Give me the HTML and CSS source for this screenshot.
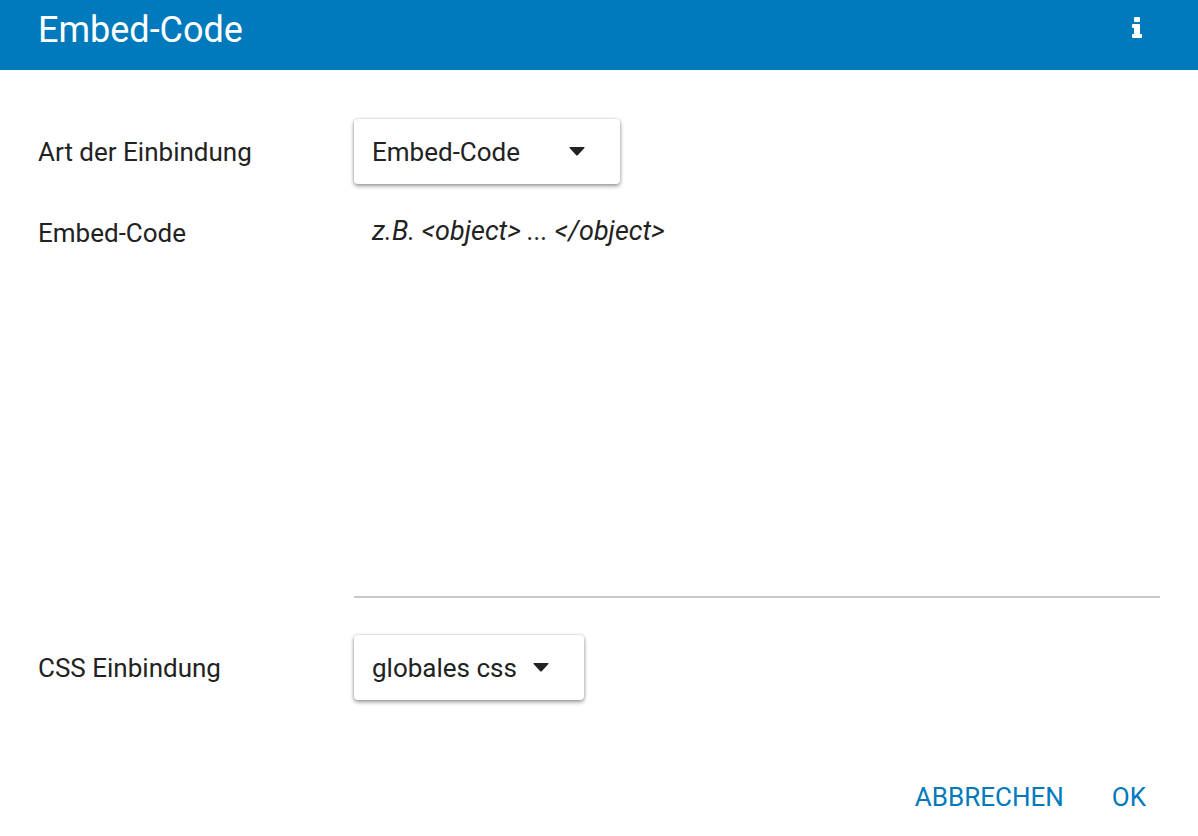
FILE: index.html
```html
<!DOCTYPE html>
<html lang="de">
<head>
  <meta charset="UTF-8">
  <meta name="viewport" content="width=device-width, initial-scale=1.0">
  <title>Embed-Code</title>
  <link rel="stylesheet" href="styles.css">
</head>
<body>
  <form class="dialog">
    <header class="dialog-header">
      <h1>Embed-Code</h1>
      <button class="info-btn" type="button" aria-label="Info">
        <svg viewBox="0 0 10 21" width="10" height="21" fill="currentColor">
          <path d="M3 0h4q1 0 1 1v3q0 1-1 1H3Q2 5 2 4V1q0-1 1-1zM1 7h6q1 0 1 1v9h1q1 0 1 1v2q0 1-1 1H1q-1 0-1-1v-2q0-1 1-1h1v-6H1q-1 0-1-1V8q0-1 1-1z"/>
        </svg>
      </button>
    </header>

    <div class="dialog-body">
      <div class="row">
        <label for="embedType">Art der Einbindung</label>
        <div class="field">
          <select class="select select-type" id="embedType">
            <option>Embed-Code</option>
          </select>
        </div>
      </div>
      <div class="row row-code">
        <label for="embedCode">Embed-Code</label>
        <textarea class="code" id="embedCode" placeholder="z.B. &lt;object&gt; ... &lt;/object&gt;"></textarea>
      </div>
      <div class="row">
        <label for="cssType">CSS Einbindung</label>
        <div class="field">
          <select class="select select-css" id="cssType">
            <option>globales css</option>
          </select>
        </div>
      </div>
    </div>

    <footer class="dialog-footer">
      <button class="btn" type="button">Abbrechen</button>
      <button class="btn" type="submit">OK</button>
    </footer>
  </form>
</body>
</html>
```

FILE: styles.css
```css
:root {
  --blue: #007abc;
  --text: #222;
  --line: #c8c8c8;
}

* {
  box-sizing: border-box;
  margin: 0;
  padding: 0;
}

body {
  font-family: Roboto, sans-serif;
  font-size: 26px;
  line-height: 32px;
  background: #fff;
  color: var(--text);
}

.dialog {
  display: flex;
  flex-direction: column;
  min-height: 100vh;
}

.dialog-header {
  display: flex;
  justify-content: space-between;
  align-items: flex-start;
  padding: 8px 56px 18px 38px;
  background: var(--blue);
  color: #fff;
}

.dialog-header h1 {
  font-size: 36px;
  line-height: 44px;
  font-weight: 400;
}

.info-btn {
  display: flex;
  padding-top: 9px;
  background: none;
  border: none;
  color: inherit;
  cursor: pointer;
}

.dialog-body {
  flex: 1;
  display: flex;
  flex-direction: column;
  padding: 49px 38px 0;
}

.row {
  display: grid;
  grid-template-columns: 300px 1fr;
  column-gap: 16px;
  align-items: center;
}

.row-code {
  align-items: start;
  margin: 24px 0 37px;
}

.row-code label {
  padding-top: 9px;
}

.select {
  display: block;
  appearance: none;
  height: 65px;
  padding: 0 18px;
  border: none;
  border-radius: 4px;
  box-shadow: 0 2px 4px rgba(0, 0, 0, 0.4), 0 0 3px rgba(0, 0, 0, 0.15);
  font: inherit;
  color: inherit;
  background: #fff url("data:image/svg+xml,%3Csvg xmlns='http://www.w3.org/2000/svg' viewBox='0 0 16 9'%3E%3Cpath d='M1 0h14q1 0 .4 1L9 8q-1 1-2 0L.6 1Q0 0 1 0z' fill='%23222'/%3E%3C/svg%3E") no-repeat right 35px center / 16px 9px;
}

.select-type {
  width: 266px;
}

.select-css {
  width: 230px;
}

.code {
  display: block;
  width: 100%;
  height: 390px;
  padding: 7px 18px;
  border: none;
  border-bottom: 2px solid var(--line);
  font: inherit;
  color: inherit;
  resize: none;
}

.code::placeholder {
  color: var(--text);
  font-size: 27px;
  font-style: italic;
  opacity: 1;
}

.dialog-footer {
  display: flex;
  justify-content: flex-end;
  gap: 16px;
  padding: 16px 36px 19px;
}

.btn {
  padding: 4px 16px;
  background: none;
  border: none;
  font: inherit;
  color: var(--blue);
  text-transform: uppercase;
  cursor: pointer;
}
```
